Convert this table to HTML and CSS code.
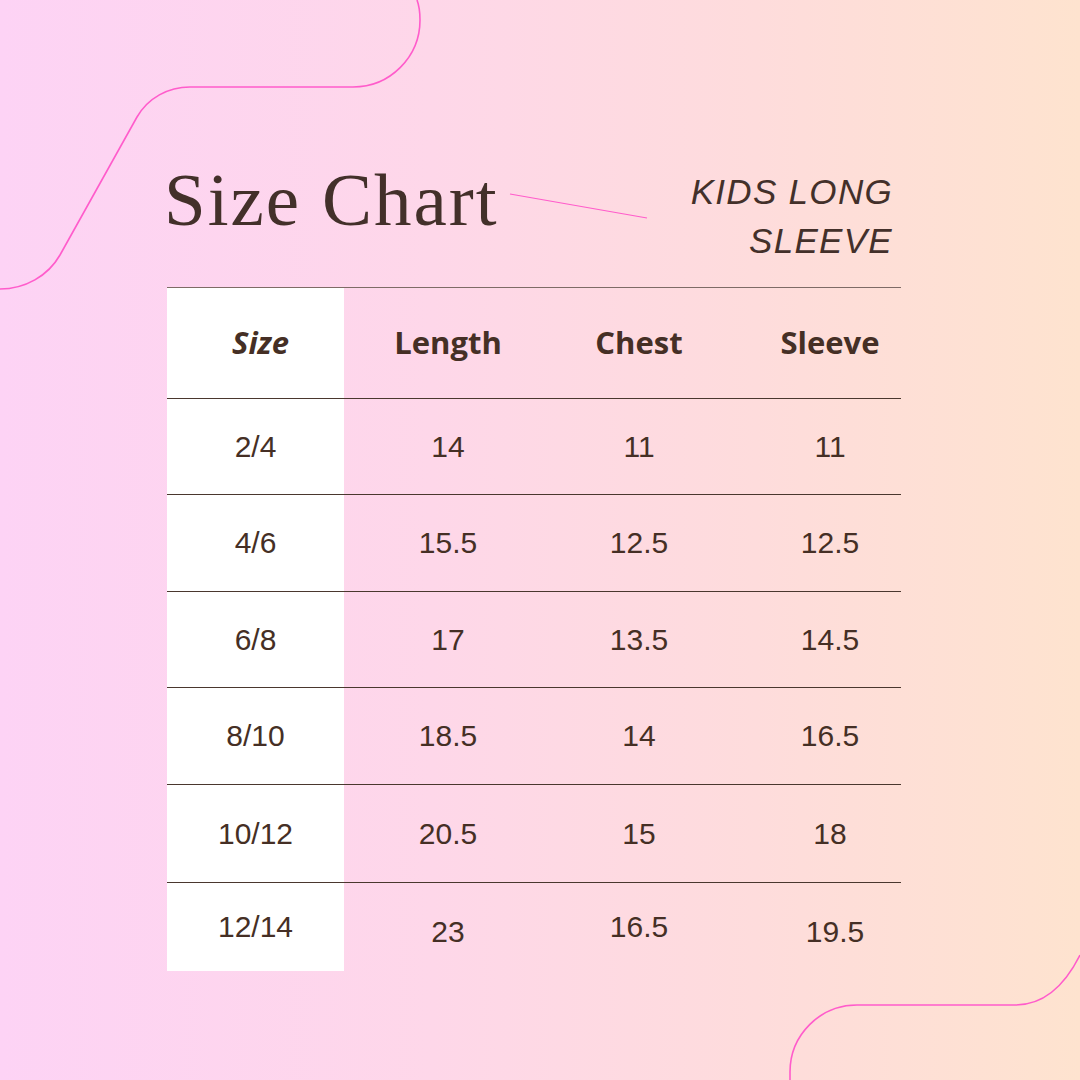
FILE: index.html
```html
<!DOCTYPE html>
<html lang="en">
<head>
<meta charset="utf-8">
<title>Size Chart</title>
<link rel="stylesheet" href="styles.css">
</head>
<body>
<div class="page">
  <svg class="deco" width="1080" height="1080" viewBox="0 0 1080 1080" aria-hidden="true">
    <path d="M417,0 Q420,8 420,20 A67,67 0 0 1 353,87 L190,87 C168,87 148,98 137,117 L60,255 C48,276 25,289 0,289" />
    <path d="M1080,955 C1065,985 1045,1005 1015,1005 L857,1005 A67,67 0 0 0 790,1072 L790,1080" />
  </svg>
  <div class="content">
    <header class="head">
      <h1 class="title">Size Chart</h1>
      <svg class="connector" width="140" height="28" viewBox="0 0 140 28" aria-hidden="true">
        <line x1="1" y1="2" x2="138" y2="26" />
      </svg>
      <p class="subtitle">KIDS LONG<br>SLEEVE</p>
    </header>
    <div class="table">
      <div class="row row-head">
        <div class="cell c1 th"><em>Size</em></div>
        <div class="cell c2 th">Length</div>
        <div class="cell c3 th">Chest</div>
        <div class="cell c4 th">Sleeve</div>
      </div>
      <div class="row">
        <div class="cell c1">2/4</div>
        <div class="cell c2">14</div>
        <div class="cell c3">11</div>
        <div class="cell c4">11</div>
      </div>
      <div class="row">
        <div class="cell c1">4/6</div>
        <div class="cell c2">15.5</div>
        <div class="cell c3">12.5</div>
        <div class="cell c4">12.5</div>
      </div>
      <div class="row">
        <div class="cell c1">6/8</div>
        <div class="cell c2">17</div>
        <div class="cell c3">13.5</div>
        <div class="cell c4">14.5</div>
      </div>
      <div class="row">
        <div class="cell c1">8/10</div>
        <div class="cell c2">18.5</div>
        <div class="cell c3">14</div>
        <div class="cell c4">16.5</div>
      </div>
      <div class="row">
        <div class="cell c1">10/12</div>
        <div class="cell c2">20.5</div>
        <div class="cell c3">15</div>
        <div class="cell c4">18</div>
      </div>
      <div class="row row-last">
        <div class="cell c1">12/14</div>
        <div class="cell c2 low">23</div>
        <div class="cell c3">16.5</div>
        <div class="cell c4 low shift">19.5</div>
      </div>
    </div>
  </div>
</div>
</body>
</html>
```
FILE: styles.css
```css
* { box-sizing: border-box; }

html, body {
  margin: 0;
  padding: 0;
}

body {
  width: 1080px;
  height: 1080px;
  overflow: hidden;
  color: #43302a;
}

.page {
  position: relative;
  width: 1080px;
  height: 1080px;
  background: linear-gradient(90deg, #fdd3f5 0%, #fed7e9 40%, #fedcdc 70%, #fee3cf 100%);
  overflow: hidden;
}

.deco {
  position: absolute;
  left: 0;
  top: 0;
}

.deco path {
  fill: none;
  stroke: #ff5ccb;
  stroke-width: 1.6;
}

.content {
  position: relative;
  padding: 162px 0 0 167px;
}

.head {
  display: flex;
  align-items: flex-start;
  width: 734px;
  height: 125px;
}

.title {
  margin: 0 0 0 -3px;
  font-family: "Liberation Serif", "Times New Roman", serif;
  font-weight: 400;
  font-size: 75px;
  line-height: 75px;
  letter-spacing: 2px;
  color: #43302a;
  white-space: nowrap;
}

.connector {
  margin: 30px 0 0 10px;
  flex: none;
}

.connector line {
  stroke: #ff5ccb;
  stroke-width: 1.1;
}

.subtitle {
  margin: 5px 8px 0 auto;
  font-family: "Liberation Sans", Arial, sans-serif;
  font-style: italic;
  font-weight: 400;
  font-size: 35px;
  line-height: 49px;
  letter-spacing: 1.3px;
  text-align: right;
  color: #43302a;
}

.table {
  width: 734px;
}

.row {
  display: grid;
  grid-template-columns: 177px 191px 191px 175px;
  height: 97px;
  border-top: 1px solid #4a372e;
}

.row:nth-child(2),
.row:nth-child(4) {
  height: 96px;
}

.row:nth-child(6) {
  height: 98px;
}

.row-head {
  height: 111px;
  border-top-color: #7e6b66;
}

.row.row-last {
  height: 89px;
}

.cell {
  display: flex;
  align-items: center;
  justify-content: center;
  font-family: "Liberation Sans", Arial, sans-serif;
  font-size: 30px;
  color: #452f25;
}

.c1 {
  background: #ffffff;
}

.c2, .c3 {
  padding-left: 17px;
}

.c4 {
  padding-left: 33px;
}

.th {
  font-family: "Open Sans", "Liberation Sans", sans-serif;
  font-weight: 700;
  font-size: 31px;
  padding-bottom: 2px;
}

.th em {
  font-style: italic;
  padding-left: 10px;
}

.low {
  padding-top: 10px;
}

.c4.shift {
  padding-left: 43px;
}
```
